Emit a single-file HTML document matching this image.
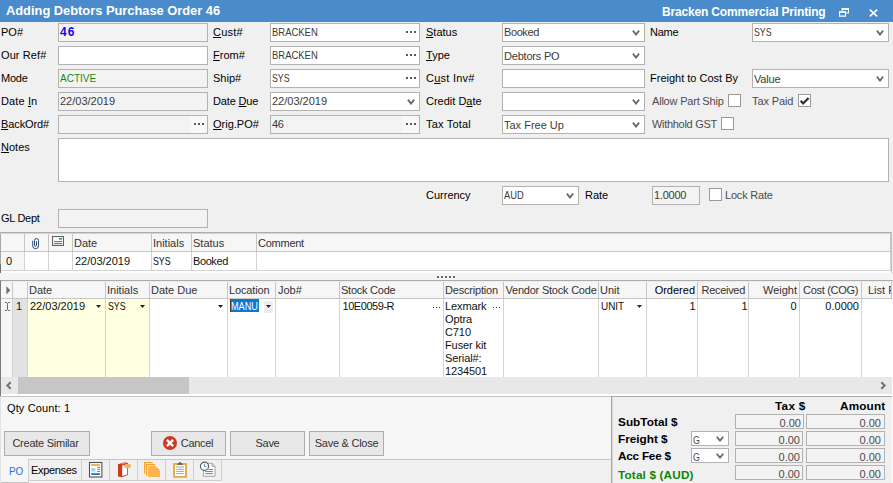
<!DOCTYPE html>
<html><head><meta charset="utf-8">
<style>
*{box-sizing:border-box;margin:0;padding:0}
html,body{width:893px;height:483px;overflow:hidden;background:#f0f0f0}
body{font-family:"Liberation Sans",sans-serif;font-size:11px;color:#000;position:relative}
.a{position:absolute;white-space:nowrap}
.l{position:absolute;white-space:nowrap;font-size:11px;line-height:14px;color:#000}
.g{color:#4c4c4c}
.f{position:absolute;height:19px;border:1px solid #b2b2b2;background:#fff;font-size:11px;line-height:16px;padding-left:1px;white-space:nowrap;color:#3a3a3a;overflow:hidden}
.ro{background:#f3f3f3}
.dots{position:absolute;right:3px;top:7px;width:10px;height:2px;background:
 linear-gradient(90deg,#585858 0 2px,transparent 2px 4px,#585858 4px 6px,transparent 6px 8px,#585858 8px 10px);}
.chev{position:absolute;right:4px;top:6px;width:8px;height:6px}
.cb{position:absolute;width:13px;height:13px;border:1px solid #9a9a9a;background:#fff}
u{text-decoration:underline}
.btn{position:absolute;height:25px;border:1px solid #adadad;background:#e8e8e8;font-size:11px;line-height:23px;text-align:center;color:#333}
.gh{position:absolute;background:#f6f6f6;border-right:1px solid #c6c6c6;border-bottom:1px solid #c6c6c6;font-size:11px;line-height:15px;padding-left:1px;white-space:nowrap;overflow:hidden;color:#333}
.gc{position:absolute;background:#fff;border-right:1px solid #d2d2d2;font-size:11px;line-height:15px;padding-left:2px;white-space:nowrap;overflow:hidden;color:#111}
.tb{position:absolute;font-size:11.75px;font-weight:bold;line-height:14px;white-space:nowrap;color:#000}
.tf{position:absolute;height:15px;border:1px solid #b2b2b2;background:#f3f3f3;font-size:11px;line-height:16.5px;text-align:right;padding-right:2px;color:#4a4a4a}
.ar{position:absolute;width:5px;height:3px}
</style></head><body>

<div class="a" style="left:0;top:0;width:893px;height:22px;background:#4a8ccb"></div>
<div class="a" style="left:6px;top:3px;font-size:12.85px;font-weight:bold;color:#fff;line-height:16px">Adding Debtors Purchase Order 46</div>
<div class="a" style="left:662px;top:5px;font-size:12px;font-weight:bold;color:#fff;line-height:15px;letter-spacing:-0.17px">Bracken Commercial Printing</div>
<svg class="a" style="left:838px;top:8px" width="12" height="10" viewBox="0 0 12 10"><path d="M3.7 1H11" stroke="#fff" stroke-width="1.8"/><path d="M10.45 0.1V5.5M8 4.95H11M4.25 0.1V3.2" stroke="#fff" stroke-width="1.1"/><path d="M1 4.1H8" stroke="#fff" stroke-width="1.8"/><path d="M1.55 3.2V8.7M7.45 3.2V8.7M1 8.15H8" stroke="#fff" stroke-width="1.1"/></svg>
<svg class="a" style="left:869px;top:8.6px" width="10" height="9" viewBox="0 0 10 9"><path d="M0.8 0.7L8.2 7.3M8.2 0.7L0.8 7.3" stroke="#fff" stroke-width="1.6"/></svg>
<div class="l" style="left:1px;top:25px">PO#</div>
<div class="f ro" style="left:58px;top:23px;width:150px;color:#0c0cf0;font-weight:bold;font-size:12px;letter-spacing:1px;line-height:17.5px">46</div>
<div class="l" style="left:1px;top:48px;letter-spacing:0.1px">Our Ref#</div>
<div class="f" style="left:58px;top:46px;width:150px"></div>
<div class="l" style="left:1px;top:71px;letter-spacing:-0.25px">Mode</div>
<div class="f ro" style="left:58px;top:69px;width:150px;color:#128a12"><span style="display:inline-block;transform:scaleX(0.91);transform-origin:0 50%">ACTIVE</span></div>
<div class="l" style="left:1px;top:94px;letter-spacing:0.12px">Date <u>I</u>n</div>
<div class="f ro" style="left:58px;top:92px;width:150px">22/03/2019</div>
<div class="l" style="left:1px;top:117px;letter-spacing:-0.1px"><u>B</u>ackOrd#</div>
<div class="f ro" style="left:58px;top:115px;width:150px"><i class="a" style="right:0;top:0;width:17px;height:17px;background:#f8f8f8"></i><i class="dots"></i></div>
<div class="l" style="left:213px;top:25px;letter-spacing:0.2px"><u>C</u>ust#</div>
<div class="f" style="left:270px;top:23px;width:150px"><span style="display:inline-block;transform:scaleX(0.86);transform-origin:0 50%">BRACKEN</span><i class="dots"></i></div>
<div class="l" style="left:213px;top:48px"><u>F</u>rom#</div>
<div class="f" style="left:270px;top:46px;width:150px"><span style="display:inline-block;transform:scaleX(0.86);transform-origin:0 50%">BRACKEN</span><i class="dots"></i></div>
<div class="l" style="left:213px;top:71px">Ship#</div>
<div class="f" style="left:270px;top:69px;width:150px"><span style="display:inline-block;transform:scaleX(0.8);transform-origin:0 50%">SYS</span><i class="dots"></i></div>
<div class="l" style="left:213px;top:94px;letter-spacing:-0.15px">Date <u>D</u>ue</div>
<div class="f" style="left:270px;top:92px;width:150px">22/03/2019<svg class="chev" viewBox="0 0 8 6"><path d="M0.9 0.6L4 4.6L7.1 0.6" fill="none" stroke="#6a6a6a" stroke-width="1.8"/></svg></div>
<div class="l" style="left:213px;top:117px"><u>O</u>rig.PO#</div>
<div class="f ro" style="left:270px;top:115px;width:150px;letter-spacing:-0.3px">46<i class="a" style="right:0;top:0;width:17px;height:17px;background:#f8f8f8"></i><i class="dots"></i></div>
<div class="l" style="left:426px;top:25px"><u>S</u>tatus</div>
<div class="f" style="left:502px;top:23px;width:143px;letter-spacing:-0.4px">Booked<svg class="chev" viewBox="0 0 8 6"><path d="M0.9 0.6L4 4.6L7.1 0.6" fill="none" stroke="#6a6a6a" stroke-width="1.8"/></svg></div>
<div class="l" style="left:426px;top:48px"><u>T</u>ype</div>
<div class="f" style="left:502px;top:46px;width:143px;letter-spacing:-0.2px;line-height:18px">Debtors PO<svg class="chev" viewBox="0 0 8 6"><path d="M0.9 0.6L4 4.6L7.1 0.6" fill="none" stroke="#6a6a6a" stroke-width="1.8"/></svg></div>
<div class="l" style="left:426px;top:71px;letter-spacing:0.25px">C<u>u</u>st Inv#</div>
<div class="f" style="left:502px;top:69px;width:143px"></div>
<div class="l" style="left:426px;top:94px">Credit D<u>a</u>te</div>
<div class="f" style="left:502px;top:92px;width:143px"><svg class="chev" viewBox="0 0 8 6"><path d="M0.9 0.6L4 4.6L7.1 0.6" fill="none" stroke="#6a6a6a" stroke-width="1.8"/></svg></div>
<div class="l" style="left:426px;top:117px;letter-spacing:0.2px">Tax Total</div>
<div class="f" style="left:502px;top:115px;width:143px;line-height:18px">Tax Free Up<svg class="chev" viewBox="0 0 8 6"><path d="M0.9 0.6L4 4.6L7.1 0.6" fill="none" stroke="#6a6a6a" stroke-width="1.8"/></svg></div>
<div class="l" style="left:650px;top:25px;letter-spacing:-0.25px">Name</div>
<div class="f" style="left:752px;top:23px;width:137px"><span style="display:inline-block;transform:scaleX(0.8);transform-origin:0 50%">SYS</span><svg class="chev" viewBox="0 0 8 6"><path d="M0.9 0.6L4 4.6L7.1 0.6" fill="none" stroke="#6a6a6a" stroke-width="1.8"/></svg></div>
<div class="l" style="left:650px;top:71px">Freight to Cost By</div>
<div class="f" style="left:752px;top:69px;width:137px;letter-spacing:-0.2px;line-height:18px">Value<svg class="chev" viewBox="0 0 8 6"><path d="M0.9 0.6L4 4.6L7.1 0.6" fill="none" stroke="#6a6a6a" stroke-width="1.8"/></svg></div>
<div class="l g" style="left:652px;top:94px;letter-spacing:-0.2px">Allow Part Ship</div>
<div class="cb" style="left:728px;top:94px"></div>
<div class="l g" style="left:752px;top:94px;letter-spacing:-0.1px">Tax Paid</div>
<div class="cb" style="left:798px;top:94px"><svg width="11" height="11" viewBox="0 0 11 11" style="position:absolute;left:0;top:0"><path d="M1.7 5.8L4.1 8.4L9.6 2.9" fill="none" stroke="#2c2c2c" stroke-width="2.1"/></svg></div>
<div class="l g" style="left:652px;top:117px;letter-spacing:-0.3px">Withhold GST</div>
<div class="cb" style="left:721px;top:117px"></div>
<div class="l" style="left:1px;top:140px"><u>N</u>otes</div>
<div class="f" style="left:58px;top:138px;width:831px;height:44px"></div>
<div class="l" style="left:426px;top:188px">Currency</div>
<div class="f" style="left:502px;top:186px;width:77px"><span style="display:inline-block;transform:scaleX(0.85);transform-origin:0 50%">AUD</span><svg class="chev" viewBox="0 0 8 6"><path d="M0.9 0.6L4 4.6L7.1 0.6" fill="none" stroke="#6a6a6a" stroke-width="1.8"/></svg></div>
<div class="l" style="left:585px;top:188px">Rate</div>
<div class="f ro" style="left:652px;top:186px;width:48px;letter-spacing:-0.25px;padding-left:1px">1.0000</div>
<div class="cb" style="left:709px;top:188px"></div>
<div class="l g" style="left:725px;top:188px;letter-spacing:-0.2px">Lock Rate</div>
<div class="l" style="left:1px;top:211px;letter-spacing:-0.3px">GL Dept</div>
<div class="f ro" style="left:58px;top:209px;width:150px"></div>
<div class="a" style="left:0;top:232px;width:892px;height:41px;background:#fff;border-top:1px solid #acacac;border-left:1px solid #a8a8a8;border-right:1px solid #c0c0c0"></div>
<div class="a" style="left:0;top:233px;width:892px;height:1px;background:#d4d4d4"></div>
<div class="a" style="left:0;top:264px;width:1px;height:9px;background:#707070"></div>
<div class="gh" style="left:1px;top:234px;width:24px;height:18px;padding-top:2px;"></div>
<div class="gh" style="left:25px;top:234px;width:24px;height:18px;padding-top:2px;"></div>
<div class="gh" style="left:49px;top:234px;width:24px;height:18px;padding-top:2px;"></div>
<div class="gh" style="left:73px;top:234px;width:79px;height:18px;padding-top:2px;">Date</div>
<div class="gh" style="left:152px;top:234px;width:40px;height:18px;padding-top:2px;">Initials</div>
<div class="gh" style="left:192px;top:234px;width:65px;height:18px;padding-top:2px;">Status</div>
<div class="gh" style="left:257px;top:234px;width:634px;height:18px;padding-top:2px;letter-spacing:-0.25px;">Comment</div>
<div class="gc" style="left:1px;top:252px;width:24px;height:19px;background:#f6f6f6;padding-top:2px;padding-left:5px;border-bottom:1px solid #d2d2d2;">0</div>
<div class="gc" style="left:25px;top:252px;width:24px;height:19px;border-bottom:1px solid #d2d2d2;"></div>
<div class="gc" style="left:49px;top:252px;width:24px;height:19px;border-bottom:1px solid #d2d2d2;"></div>
<div class="gc" style="left:73px;top:252px;width:79px;height:19px;padding-top:2px;padding-left:2px;border-bottom:1px solid #d2d2d2;">22/03/2019</div>
<div class="gc" style="left:152px;top:252px;width:40px;height:19px;padding-top:2px;padding-left:1px;border-bottom:1px solid #d2d2d2;"><span style="display:inline-block;transform:scaleX(0.8);transform-origin:0 50%">SYS</span></div>
<div class="gc" style="left:192px;top:252px;width:65px;height:19px;padding-top:2px;padding-left:1px;letter-spacing:-0.4px;border-bottom:1px solid #d2d2d2;">Booked</div>
<div class="gc" style="left:257px;top:252px;width:634px;height:19px;border-bottom:1px solid #d2d2d2;"></div>
<svg class="a" style="left:32px;top:237.5px" width="8" height="12" viewBox="0 0 8 12"><path d="M0.7 2.8V7.8a2.9 2.9 0 0 0 5.8 0V2.6a2 2 0 0 0-4 0V7.3a1 1 0 0 0 2 0V3.2" fill="none" stroke="#2e4c78" stroke-width="1"/></svg>
<svg class="a" style="left:52px;top:236px" width="12" height="10" viewBox="0 0 12 10"><rect x="0.55" y="0.55" width="10.9" height="8.9" fill="#fff" stroke="#636363" stroke-width="1.1"/><rect x="7" y="2" width="3" height="1.7" fill="#36a860"/><path d="M2.1 5.6h7.9M2.1 7.6h7.9" stroke="#3a70c0" stroke-width="1"/></svg>
<div class="a" style="left:0;top:273px;width:893px;height:7px;background:#f4f4f4"></div>
<div class="a" style="left:437px;top:276px;width:18px;height:2px;background:linear-gradient(90deg,#686868 0 2px,transparent 2px 4px,#686868 4px 6px,transparent 6px 8px,#686868 8px 10px,transparent 10px 12px,#686868 12px 14px,transparent 14px 16px,#686868 16px 18px)"></div>
<div class="a" style="left:0;top:280px;width:893px;height:116px;background:#fff;border-top:1px solid #acacac;border-left:1px solid #7c7c7c"></div>
<div class="a" style="left:1px;top:281px;width:892px;height:1px;background:#ececec"></div>
<div class="gh" style="left:1px;top:282px;width:12px;height:17px;padding-top:1px;"></div>
<div class="gh" style="left:13px;top:282px;width:15px;height:17px;padding-top:1px;"></div>
<div class="gh" style="left:28px;top:282px;width:78px;height:17px;padding-top:1px;">Date</div>
<div class="gh" style="left:106px;top:282px;width:44px;height:17px;padding-top:1px;">Initials</div>
<div class="gh" style="left:150px;top:282px;width:78px;height:17px;padding-top:1px;">Date Due</div>
<div class="gh" style="left:228px;top:282px;width:48px;height:17px;padding-top:1px;letter-spacing:-0.15px;">Location</div>
<div class="gh" style="left:276px;top:282px;width:64px;height:17px;padding-top:1px;padding-left:2px;">Job#</div>
<div class="gh" style="left:340px;top:282px;width:104px;height:17px;padding-top:1px;letter-spacing:-0.25px;">Stock Code</div>
<div class="gh" style="left:444px;top:282px;width:60px;height:17px;padding-top:1px;letter-spacing:-0.2px;">Description</div>
<div class="gh" style="left:504px;top:282px;width:95px;height:17px;padding-top:1px;letter-spacing:-0.22px;padding-left:1.5px;">Vendor Stock Code</div>
<div class="gh" style="left:599px;top:282px;width:48px;height:17px;padding-top:1px;">Unit</div>
<div class="gh" style="left:647px;top:282px;width:51px;height:17px;padding-top:1px;text-align:right;padding-right:2px;color:#000;">Ordered</div>
<div class="gh" style="left:698px;top:282px;width:51px;height:17px;padding-top:1px;text-align:right;padding-right:3px;letter-spacing:-0.3px;">Received</div>
<div class="gh" style="left:749px;top:282px;width:51px;height:17px;padding-top:1px;text-align:right;padding-right:2px;">Weight</div>
<div class="gh" style="left:800px;top:282px;width:62px;height:17px;padding-top:1px;letter-spacing:-0.3px;padding-left:3px;">Cost (COG)</div>
<div class="gh" style="left:862px;top:282px;width:30px;height:17px;padding-top:1px;padding-left:6px;border-right:1px solid #c6c6c6;">List P</div>
<svg class="a" style="left:5.5px;top:286px" width="5" height="9" viewBox="0 0 5 9"><path d="M0.4 0.2L4.3 4.3L0.4 8.4z" fill="#6e6e6e"/></svg>
<div class="gc" style="left:1px;top:299px;width:12px;height:78px;background:#f6f6f6;"></div>
<div class="gc" style="left:13px;top:299px;width:15px;height:78px;background:#e2e2e2;padding-left:3px;">1</div>
<div class="gc" style="left:28px;top:299px;width:78px;height:78px;background:#ffffe1;padding-left:2px;">22/03/2019</div>
<div class="gc" style="left:106px;top:299px;width:44px;height:78px;background:#ffffe1;padding-left:1.5px;"><span style="display:inline-block;transform:scaleX(0.8);transform-origin:0 50%">SYS</span></div>
<div class="gc" style="left:150px;top:299px;width:78px;height:78px;"></div>
<div class="gc" style="left:228px;top:299px;width:48px;height:78px;"></div>
<div class="gc" style="left:276px;top:299px;width:64px;height:78px;"></div>
<div class="gc" style="left:340px;top:299px;width:104px;height:78px;padding-left:2.5px;letter-spacing:-0.45px;">10E0059-R</div>
<div class="gc" style="left:444px;top:299px;width:60px;height:78px;white-space:normal;line-height:13px;padding-top:1px;padding-left:1px;letter-spacing:-0.1px;">Lexmark<br>Optra<br>C710<br>Fuser kit<br>Serial#:<br>1234501</div>
<div class="gc" style="left:504px;top:299px;width:95px;height:78px;"></div>
<div class="gc" style="left:599px;top:299px;width:48px;height:78px;"><span style="display:inline-block;transform:scaleX(0.9);transform-origin:0 50%">UNIT</span></div>
<div class="gc" style="left:647px;top:299px;width:51px;height:78px;text-align:right;padding-right:1.5px;">1</div>
<div class="gc" style="left:698px;top:299px;width:51px;height:78px;text-align:right;padding-right:0.5px;">1</div>
<div class="gc" style="left:749px;top:299px;width:51px;height:78px;text-align:right;padding-right:2.5px;">0</div>
<div class="gc" style="left:800px;top:299px;width:62px;height:78px;text-align:right;padding-right:2px;">0.0000</div>
<div class="gc" style="left:862px;top:299px;width:30px;height:78px;border-right:none;"></div>
<svg class="a" style="left:5px;top:302px" width="5" height="9" viewBox="0 0 5 9"><path d="M0 0.5h2M3 0.5h2M2.5 1v7M0 8.5h2M3 8.5h2" stroke="#6a6a6a" stroke-width="1" fill="none"/></svg>
<div class="a" style="left:230px;top:299px;width:29px;height:13px;background:#0a78d6;border-left:1px solid #4a3418;color:#fff;font-size:11px;line-height:15px;padding-left:0px;overflow:hidden"><span style="display:inline-block;transform:scaleX(0.83);transform-origin:0 50%">MANU</span></div>
<div class="a" style="left:264px;top:301px;width:9px;height:12px;background:#eeeeee"></div>
<svg class="ar" style="left:96px;top:305px" viewBox="0 0 5 3"><path d="M0 0h5L2.5 3z" fill="#222"/></svg>
<svg class="ar" style="left:140px;top:305px" viewBox="0 0 5 3"><path d="M0 0h5L2.5 3z" fill="#222"/></svg>
<svg class="ar" style="left:218px;top:305px" viewBox="0 0 5 3"><path d="M0 0h5L2.5 3z" fill="#222"/></svg>
<svg class="ar" style="left:266px;top:305px" viewBox="0 0 5 3"><path d="M0 0h5L2.5 3z" fill="#222"/></svg>
<svg class="ar" style="left:637px;top:305px" viewBox="0 0 5 3"><path d="M0 0h5L2.5 3z" fill="#222"/></svg>
<div class="a" style="left:433px;top:307px;width:7px;height:1px;background:linear-gradient(90deg,#333 0 1px,transparent 1px 3px,#333 3px 4px,transparent 4px 6px,#333 6px 7px)"></div>
<div class="a" style="left:492.5px;top:307px;width:7px;height:1px;background:linear-gradient(90deg,#333 0 1px,transparent 1px 3px,#333 3px 4px,transparent 4px 6px,#333 6px 7px)"></div>
<div class="a" style="left:1px;top:377px;width:891px;height:17px;background:#e8e8e8"></div>
<div class="a" style="left:18px;top:377px;width:171px;height:17px;background:#c6c6c6"></div>
<svg class="a" style="left:5px;top:381px" width="8" height="9" viewBox="0 0 8 9"><path d="M5.7 1.3L2.3 4.5L5.7 7.7" fill="none" stroke="#707070" stroke-width="1.9"/></svg>
<svg class="a" style="left:879px;top:381px" width="8" height="9" viewBox="0 0 8 9"><path d="M2.3 1.3L5.7 4.5L2.3 7.7" fill="none" stroke="#707070" stroke-width="1.9"/></svg>
<div class="a" style="left:0;top:396px;width:893px;height:1px;background:#c4c4c4"></div>
<div class="a" style="left:0;top:397px;width:611px;height:62px;background:#f6f6f6"></div>
<div class="l" style="left:7px;top:401px;letter-spacing:0.12px">Qty Count: 1</div>
<div class="btn" style="left:4px;top:431px;width:86px;letter-spacing:-0.25px;padding-right:3px">Create Similar</div>
<div class="btn" style="left:151px;top:431px;width:75px;padding-left:17px;letter-spacing:-0.3px">Cancel</div>
<svg class="a" style="left:163px;top:436px" width="14" height="14" viewBox="0 0 14 14"><circle cx="7" cy="7" r="7" fill="#cc3a26"/><path d="M3.9 3.9L10.1 10.1M10.1 3.9L3.9 10.1" stroke="#fff" stroke-width="2.3"/></svg>
<div class="btn" style="left:230px;top:431px;width:75px;letter-spacing:-0.3px">Save</div>
<div class="btn" style="left:309px;top:431px;width:75px;letter-spacing:-0.25px">Save &amp; Close</div>
<div class="a" style="left:0;top:459px;width:611px;height:1px;background:#c6c6c6"></div>
<div class="a" style="left:0px;top:459px;width:29px;height:24px;background:#f6f6f6;border-right:1px solid #d0d0d0;border-bottom:1px solid #c4c4c4"></div>
<div class="a" style="left:29px;top:481px;width:193px;height:2px;background:#f6f6f6"></div>
<div class="l" style="left:9px;top:464px;color:#1a74d4"><span style="display:inline-block;transform:scaleX(0.9);transform-origin:0 50%">PO</span></div>
<div class="l" style="left:31px;top:463px;letter-spacing:-0.32px">Expenses</div>
<div class="a" style="left:81px;top:460px;width:1px;height:21px;background:#cfcfcf"></div>
<div class="a" style="left:109px;top:460px;width:1px;height:21px;background:#cfcfcf"></div>
<div class="a" style="left:137px;top:460px;width:1px;height:21px;background:#cfcfcf"></div>
<div class="a" style="left:165px;top:460px;width:1px;height:21px;background:#cfcfcf"></div>
<div class="a" style="left:193px;top:460px;width:1px;height:21px;background:#cfcfcf"></div>
<div class="a" style="left:221px;top:460px;width:1px;height:21px;background:#cfcfcf"></div>
<div class="a" style="left:611px;top:396px;width:282px;height:87px;border-left:1px solid #a6a6a6;border-top:1px solid #ababab;background:#f0f0f0"></div>
<div class="a" style="left:612px;top:397px;width:1px;height:86px;background:#d8d8d8"></div>
<div class="tb" style="left:775px;top:399px;letter-spacing:0.3px">Tax $</div>
<div class="tb" style="left:840px;top:399px;letter-spacing:0.15px">Amount</div>
<div class="tb" style="left:618px;top:415px;letter-spacing:0.05px">SubTotal $</div>
<div class="tb" style="left:618px;top:432px;letter-spacing:0px">Freight $</div>
<div class="tb" style="left:618px;top:449px;letter-spacing:-0.23px">Acc Fee $</div>
<div class="tb" style="left:618px;top:468px;color:#0c860c;letter-spacing:0.16px">Total $ (AUD)</div>
<div class="tf" style="left:735px;top:414px;width:69px">0.00</div>
<div class="tf" style="left:806px;top:414px;width:79px;padding-right:3px">0.00</div>
<div class="tf" style="left:735px;top:431px;width:68px">0.00</div>
<div class="tf" style="left:806px;top:431px;width:79px;padding-right:3px">0.00</div>
<div class="tf" style="left:735px;top:448px;width:68px">0.00</div>
<div class="tf" style="left:806px;top:448px;width:79px;padding-right:3px">0.00</div>
<div class="tf" style="left:735px;top:465px;width:68px">0.00</div>
<div class="tf" style="left:806px;top:465px;width:79px;padding-right:3px">0.00</div>
<div class="tf" style="left:691px;top:431px;width:38px;text-align:left;padding-left:1px;background:#fff;line-height:16px;overflow:hidden"><span style="display:inline-block;transform:scaleX(0.8);transform-origin:0 50%">G</span><svg style="position:absolute;right:4px;top:4px" width="8" height="6" viewBox="0 0 8 6"><path d="M0.7 0.7L4 4.6L7.3 0.7" fill="none" stroke="#666" stroke-width="1.7"/></svg></div>
<div class="tf" style="left:691px;top:448px;width:38px;text-align:left;padding-left:1px;background:#fff;line-height:16px;overflow:hidden"><span style="display:inline-block;transform:scaleX(0.8);transform-origin:0 50%">G</span><svg style="position:absolute;right:4px;top:4px" width="8" height="6" viewBox="0 0 8 6"><path d="M0.7 0.7L4 4.6L7.3 0.7" fill="none" stroke="#666" stroke-width="1.7"/></svg></div>
<div class="a" style="left:0;top:397px;width:1px;height:86px;background:#e2e2e2"></div>
<div class="a" style="left:892px;top:377px;width:1px;height:106px;background:#fcfcfc"></div>
<svg class="a" style="left:80px;top:457px" width="160" height="26" viewBox="80 457 160 26">
<!-- icon1 -->
<rect x="89.5" y="462.5" width="12.4" height="14.5" fill="#fff" stroke="#505050" stroke-width="1.1"/>
<rect x="91.2" y="464.1" width="8.8" height="1.8" fill="#f0aa44"/>
<rect x="91.2" y="468.2" width="4.2" height="3.4" fill="#a2d2f2"/>
<path d="M97.1 467.4h2.9M97.1 469.4h2.9M97.1 471.5h2.9" stroke="#5a5a5a" stroke-width="0.8"/>
<rect x="91.2" y="473.2" width="8.8" height="1.7" fill="#2464b4"/>
<!-- icon2 red book -->
<path d="M118 464.2L121.7 463.2L124.9 462.2L127.9 463V474.9L121.7 477.3L118 476.4z" fill="#cc3a1c"/>
<path d="M122.2 465.6L127.1 464.6V474.4L122.2 476.1z" fill="#fff"/><path d="M122.4 463.9l1.2-.4M124.4 463.3l1.2-.4" stroke="#fff" stroke-width="0.7"/>
<rect x="124.2" y="464" width="6.9" height="3.9" rx="1.8" fill="#ecb25c"/>
<!-- icon3 pages -->
<path d="M144.6 473.5V462.6H152.8" fill="none" stroke="#f2a434" stroke-width="1.2"/>
<path d="M146.6 475.5V464.6H155" fill="none" stroke="#f2a434" stroke-width="1.2"/>
<path d="M148 465.7H155.6L160 470.2V476.9H148z" fill="#ffb548"/>
<path d="M155.6 465.7V470.2H160" fill="#f0f0f0"/>
<path d="M155.6 466.4V470.2H159.4z" fill="#f2a434"/>
<!-- icon4 clipboard -->
<rect x="173.1" y="463" width="13.9" height="14.8" fill="#e8a94e"/>
<rect x="175" y="464.9" width="10" height="11.1" fill="#fff"/>
<path d="M176.2 467h7.7M176.2 469.3h7.7M176.2 471.4h7.7M176.2 473.6h7.7" stroke="#8c8c8c" stroke-width="0.8"/>
<path d="M177 464.7L178 463.2H179L179.6 461.9H180.6L181.2 463.2H182.2L183.1 464.7z" fill="#5a5a5a"/>
<!-- icon5 clock+doc -->
<path d="M206 463.3H212L215 466.2V476.3H203.4V470" fill="#fff" stroke="#9a9a9a" stroke-width="0.9"/>
<path d="M212 463.3V466.2H215" fill="none" stroke="#9a9a9a" stroke-width="0.9"/>
<path d="M208.5 469.5h4.3M205.3 471.6h7.5M205.3 473.7h7.5" stroke="#4a82c4" stroke-width="1"/>
<circle cx="204.5" cy="466.2" r="4.1" fill="#fff" stroke="#5a5a5a" stroke-width="1.2"/>
<path d="M204.4 463.8V466.7H206.4" fill="none" stroke="#3a80d0" stroke-width="0.9"/>
</svg>
<div class="a" style="left:28px;top:480px;width:194px;height:1px;background:#cfcfcf"></div>
</body></html>
